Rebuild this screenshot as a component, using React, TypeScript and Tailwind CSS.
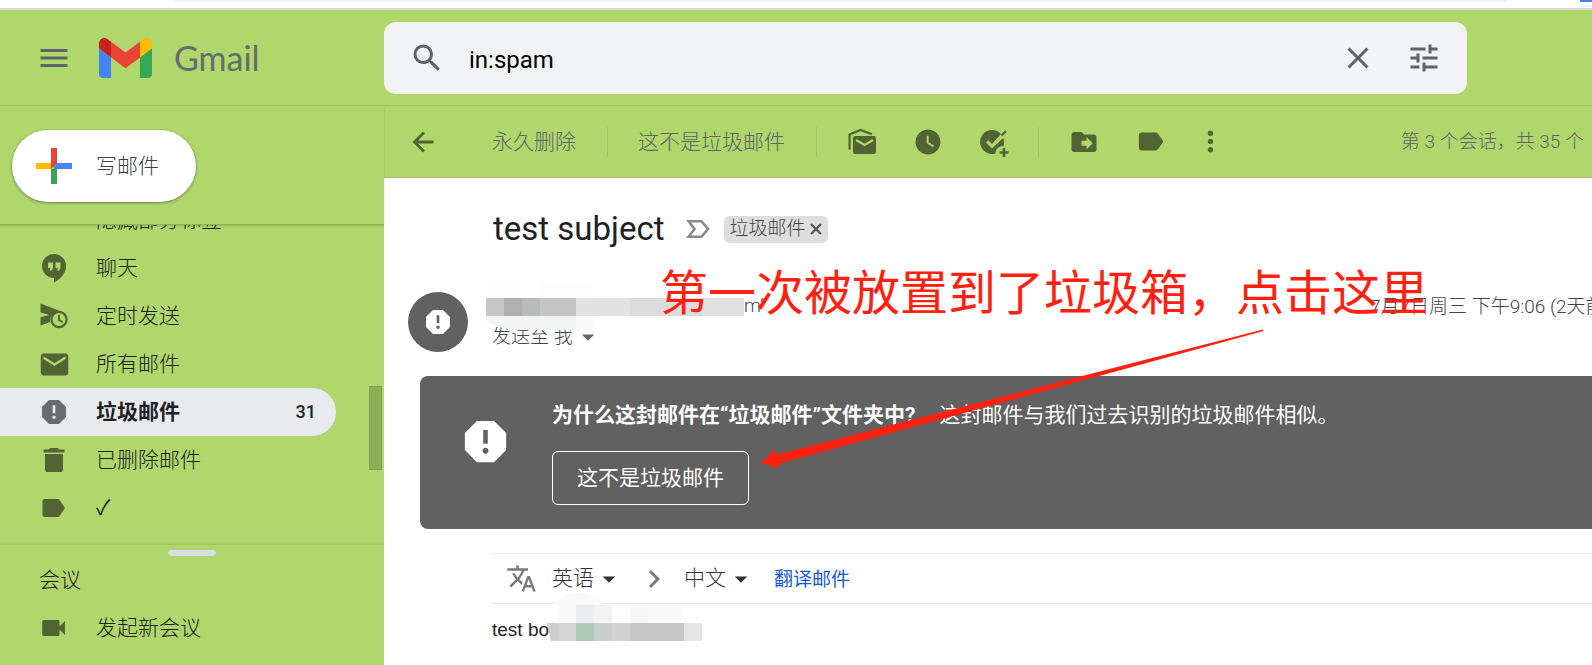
import type { ReactNode } from "react";
import {
  MdArrowDropDown,
  MdChevronRight,
  MdClose,
  MdDriveFileMove,
  MdEmail,
  MdLabel,
  MdMenu,
  MdMoreVert,
  MdReport,
  MdSearch,
  MdTranslate,
  MdTune,
  MdWatchLater,
} from "react-icons/md";

function GmailLogo() {
  return (
    <svg viewBox="52 42 88 66" className="h-10 w-[53px]" aria-hidden="true">
      <path fill="#4285f4" d="M58 108h14V74L52 59v43c0 3.32 2.69 6 6 6" />
      <path fill="#34a853" d="M120 108h14c3.32 0 6-2.69 6-6V59l-20 15" />
      <path fill="#fbbc04" d="M120 48v26l20-15v-8c0-7.42-8.47-11.65-14.4-7.2" />
      <path fill="#ea4335" d="M72 74V48l24 18 24-18v26L96 92" />
      <path fill="#c5221f" d="M52 51v8l20 15V48l-5.6-4.2c-5.94-4.45-14.4-.22-14.4 7.2" />
    </svg>
  );
}

function ComposeIcon() {
  return (
    <svg viewBox="0 0 36 36" className="size-9" aria-hidden="true">
      <path fill="#34a853" d="M15 18h6v18h-6z" />
      <path fill="#4285f4" d="M36 15H18v6h18z" />
      <path fill="#fbbc04" d="M0 15h18v6H0z" />
      <path fill="#ea4335" d="M15 0h6v15l-6 6z" />
    </svg>
  );
}

function ChatIcon() {
  return (
    <svg viewBox="0 0 30 30" className="size-[30px]" fill="currentColor" aria-hidden="true">
      <path
        fillRule="evenodd"
        d="M15 1a12 12 0 0 0 0 24v4.500c7-3.500 12-9.500 12-16.500A12 12 0 0 0 15 1ZM9 9.500h5v4.500c0 2.200-1 3.500-3 4v-3H9zM16.500 9.500h5v4.500c0 2.200-1 3.500-3 4v-3h-2z"
      />
    </svg>
  );
}

function ScheduledIcon() {
  return (
    <svg viewBox="0 0 30 30" className="size-[30px]" fill="currentColor" aria-hidden="true">
      <path d="M1.500 2.500l22 8.500c-6.500-1.200-11 1.500-12.500 6.500v3.500L1.500 24.500v-8.300l9-2.200-9-2.500z" />
      <circle cx="20" cy="18.500" r="7.600" fill="none" stroke="currentColor" strokeWidth="2.200" />
      <path d="M19 14h2v4.500l3.200 2-.9 1.600L19 19.500z" />
    </svg>
  );
}

function TrashIcon() {
  return (
    <svg viewBox="0 0 30 30" className="size-[30px]" fill="currentColor" aria-hidden="true">
      <path d="M4.500 4.500h5.200L11.200 3h7.600l1.500 1.500h5.200v3h-21zM6 9h18v15.500a2.600 2.600 0 0 1-2.600 2.600H8.600A2.600 2.600 0 0 1 6 24.500z" />
    </svg>
  );
}

function TagIcon() {
  return (
    <svg viewBox="0 0 30 30" className="size-[30px]" fill="currentColor" aria-hidden="true">
      <path d="M5.800 6h12.700c.8 0 1.500.4 2 1l5.500 8-5.500 8c-.5.600-1.200 1-2 1H5.800A2.300 2.300 0 0 1 3.500 21.700V8.300A2.300 2.300 0 0 1 5.800 6z" />
    </svg>
  );
}

function CameraIcon() {
  return (
    <svg viewBox="0 0 30 30" className="size-[30px]" fill="currentColor" aria-hidden="true">
      <path d="M4.500 7h14.700c.8 0 1.300.6 1.300 1.300v5L26 8v14l-5.500-5.300v5c0 .7-.6 1.300-1.300 1.300H4.500c-.8 0-1.300-.6-1.300-1.300V8.300C3.200 7.600 3.800 7 4.500 7z" />
    </svg>
  );
}

function BackIcon() {
  return (
    <svg viewBox="0 0 30 30" className="size-[30px]" fill="none" aria-hidden="true">
      <path stroke="currentColor" strokeWidth="2.800" d="M25.500 15h-19M16 5.500L6.500 15l9.500 9.500" />
    </svg>
  );
}

function UnreadIcon() {
  return (
    <svg viewBox="0 0 33 33" className="size-[33px]" fill="none" aria-hidden="true">
      <path stroke="currentColor" strokeWidth="2.200" d="M3.600 24.500V9.500L14.500 5l11.500 4.300" />
      <path
        fill="currentColor"
        d="M9.300 11h18.400A2.300 2.300 0 0 1 30 13.300v13.400a2.300 2.300 0 0 1-2.300 2.300H9.300A2.300 2.300 0 0 1 7 26.700V13.300A2.300 2.300 0 0 1 9.300 11z"
      />
      <path stroke="#afd76b" strokeWidth="2.200" d="M10 15l8.500 5 8.500-5" />
    </svg>
  );
}

function AddTaskIcon() {
  return (
    <svg viewBox="0 0 32 32" className="size-8" fill="none" aria-hidden="true">
      <path
        fill="currentColor"
        d="M14 4a12 12 0 1 0 3.500 23.500c0-4 2.500-7 8-7.500.9-2.500.9-5.500-.3-8L14 22.500l-6-6 2.300-2.300 3.700 3.700L23 8A12 12 0 0 0 14 4z"
      />
      <path stroke="currentColor" strokeWidth="2.200" d="M23.500 9.500L28 5" />
      <path stroke="currentColor" strokeWidth="2.600" d="M26 22v9M21.500 26.500h9" />
    </svg>
  );
}

function ImportantIcon() {
  return (
    <svg viewBox="0 0 24 20" className="h-5 w-6" fill="none" aria-hidden="true">
      <path stroke="#8a8a8a" strokeWidth="2.600" d="M2.500 2.200h13l6.500 7.800-6.500 7.800h-13L8.500 10z" />
    </svg>
  );
}

function SmallCloseIcon() {
  return (
    <svg viewBox="0 0 12 12" className="size-3" fill="none" aria-hidden="true">
      <path stroke="currentColor" strokeWidth="2.200" d="M1 1l10 10M11 1L1 11" />
    </svg>
  );
}

interface NavItemProps {
  icon?: ReactNode;
  label: ReactNode;
  count?: number;
  active?: boolean;
}

function NavItem({ icon, label, count, active }: NavItemProps) {
  return (
    <li>
      <a
        href="#"
        className={`mr-12 flex h-12 items-center rounded-r-full pr-5 pl-9 ${
          active ? "bg-[#e8eaed] font-bold" : "font-light"
        }`}
      >
        <span
          className={`flex w-9 shrink-0 justify-center ${active ? "text-[#6b6c6e]" : "text-[#526434]"}`}
        >
          {icon}
        </span>
        <span className="ml-6 flex-1 pt-0.5">{label}</span>
        {count && <span className="text-lg font-medium">{count}</span>}
      </a>
    </li>
  );
}

function Sidebar() {
  return (
    <aside className="flex w-96 shrink-0 flex-col">
      <div className="z-10 border-b border-[#8fb356] px-3 pt-6 pb-[22px] shadow-[0_1px_2px_rgba(0,0,0,0.15)]">
        <button className="flex h-18 items-center rounded-full bg-white pr-[37px] pl-6 font-light text-[#3c4043] shadow-[0_1px_3px_rgba(60,64,67,0.6)]">
          <ComposeIcon />
          <span className="ml-6 pt-0.5">写邮件</span>
        </button>
      </div>

      <nav className="relative min-h-0 flex-1 overflow-hidden">
        <ul className="-mt-[29px]">
          <NavItem label="隐藏部分标签" />
          <NavItem icon={<ChatIcon />} label="聊天" />
          <NavItem icon={<ScheduledIcon />} label="定时发送" />
          <NavItem icon={<MdEmail size={33} />} label="所有邮件" />
          <NavItem icon={<MdReport size={32} />} label="垃圾邮件" count={31} active />
          <NavItem icon={<TrashIcon />} label="已删除邮件" />
          <NavItem icon={<TagIcon />} label={<b>✓</b>} />
        </ul>
        {/* Scrollbar thumb */}
        <div className="absolute top-[161px] right-0.5 h-[84px] w-[13px] border border-[#84a350] bg-[#8dac56]" />
      </nav>

      <section className="border-t border-[#a2c762] pt-[5px] pb-[13px] shadow-[0_-1px_2px_rgba(0,0,0,0.06)]">
        <div className="mx-auto h-1.5 w-12 rounded-full bg-[#dadce0]" />
        <h2 className="flex h-12 items-center pt-0.5 pl-[39px] font-light">会议</h2>
        <ul>
          <NavItem icon={<CameraIcon />} label="发起新会议" />
        </ul>
      </section>
    </aside>
  );
}

function Header() {
  return (
    <header className="flex h-24 shrink-0 items-center border-b border-[#a0c562]">
      <div className="flex w-96 shrink-0 items-center pl-9">
        <button aria-label="主菜单" className="text-[#5f6368]">
          <MdMenu size={36} />
        </button>
        <a href="#" className="ml-[27px] flex items-center">
          <GmailLogo />
          <span className="ml-[22px] font-[Lato] text-[34px] leading-10 text-[#666b70]">Gmail</span>
        </a>
      </div>
      <form className="flex h-18 flex-1 items-center rounded-xl bg-[#f1f3f4] pr-[25px] pl-[25px] text-[#5f6368]">
        <button type="button" aria-label="搜索">
          <MdSearch size={36} />
        </button>
        <input
          aria-label="搜索邮件"
          defaultValue="in:spam"
          className="ml-6 min-w-0 flex-1 bg-transparent pt-1 text-2xl text-black outline-none"
        />
        <button type="button" aria-label="清除搜索">
          <MdClose size={36} />
        </button>
        <button type="button" aria-label="显示搜索选项" className="ml-[30px]">
          <MdTune size={36} />
        </button>
      </form>
      <div className="w-[125px] shrink-0" />
    </header>
  );
}

function Divider() {
  return <span className="h-[30px] w-px bg-[#a1c467]" />;
}

function Toolbar() {
  return (
    <div className="flex h-18 shrink-0 items-center border-b border-[#a6c874] pr-2 pl-6 text-[#526434]">
      <button aria-label="返回">
        <BackIcon />
      </button>
      <button className="ml-[54px] pt-0.5 font-light text-[#5f6368]">永久删除</button>
      <span className="w-[31px]" />
      <Divider />
      <button className="ml-[30px] pt-0.5 font-light text-[#5f6368]">这不是垃圾邮件</button>
      <span className="w-[31px]" />
      <Divider />
      <button aria-label="标记为未读" className="ml-[29px]">
        <UnreadIcon />
      </button>
      <button aria-label="延后" className="ml-[34px]">
        <MdWatchLater size={30} />
      </button>
      <button aria-label="添加到任务" className="ml-[35px]">
        <AddTaskIcon />
      </button>
      <span className="w-[28px]" />
      <Divider />
      <button aria-label="移至" className="ml-[30px]">
        <MdDriveFileMove size={30} />
      </button>
      <button aria-label="标签" className="ml-[36px]">
        <MdLabel size={31} />
      </button>
      <button aria-label="更多" className="ml-[28px]">
        <MdMoreVert size={33} />
      </button>
      <span className="ml-auto pt-0.5 text-[19px] font-light text-[#5f6368]">
        第 3 个会话，共 35 个
      </span>
    </div>
  );
}

// Blurred sender name, drawn as a strip of blocks
function SenderMosaic() {
  return (
    <svg viewBox="0 0 258 50" className="absolute -top-4 -left-1.5 h-[50px] w-[258px]" aria-hidden="true">
      <path fill="#fdfdfd" d="M0 0h36v18H0zM54 1h54v17H54z" />
      <path fill="#f2f4f4" d="M0 36h90v14H28Q10 48 0 40z" />
      <path fill="#fafafa" d="M90 36h18v14H90z" />
      <path fill="#c6c6c6" d="M0 18h18v18H0z" />
      <path fill="#b0b0b0" d="M18 18h18v18H18z" />
      <path fill="#b8babc" d="M36 18h18v18H36z" />
      <path fill="#c5c5c5" d="M54 18h36v18H54z" />
      <path fill="#e2e2e2" d="M90 18h54v18H90z" />
      <path fill="#dcdcdc" d="M144 18h72v18h-72z" />
      <path fill="#e1e1e1" d="M216 18h42v18h-42z" />
    </svg>
  );
}

function BodyMosaic() {
  return (
    <svg viewBox="0 0 155 48" className="absolute -top-[23px] left-[55px] h-12 w-[155px]" aria-hidden="true">
      <path fill="#fafafa" d="M7 12Q15 0 32 0t27 12h77v18H11V12z" />
      <path fill="#ebedf2" d="M29 12h18v18H29z" />
      <path fill="#f3f3f3" d="M47 12h18v18H47z" />
      <path fill="#fdfdfd" d="M65 12h18v18H65z" />
      <path fill="#f7f7f7" d="M83 12h18v18H83z" />
      <path fill="#cdcdcd" d="M0 30h11v18H4z" />
      <path fill="#d5d5d5" d="M11 30h18v18H11z" />
      <path fill="#aecbb8" d="M29 30h18v18H29z" />
      <path fill="#c8cfcf" d="M47 30h18v18H47z" />
      <path fill="#d2d2d2" d="M65 30h18v18H65z" />
      <path fill="#c6c6c6" d="M83 30h54v18H83z" />
      <path fill="#e5e5e5" d="M137 30h18v18h-18z" />
    </svg>
  );
}

function SpamBanner() {
  return (
    <div className="ml-9 flex h-[153px] items-start rounded-l-lg bg-[#616161] text-white">
      <MdReport className="mt-[38px] ml-[38px] shrink-0" size={55} />
      <div className="ml-[39px] pt-6">
        <p className="leading-[30px] whitespace-nowrap">
          <b className="mr-6">为什么这封邮件在“垃圾邮件”文件夹中?</b>
          这封邮件与我们过去识别的垃圾邮件相似。
        </p>
        <button className="mt-[21px] h-[54px] rounded-md border border-white px-6 pt-0.5">
          这不是垃圾邮件
        </button>
      </div>
    </div>
  );
}

function Annotation() {
  return (
    <>
      <p className="absolute top-20 left-[276px] text-5xl leading-[72px] whitespace-nowrap text-[#ff2010]">
        第一次被放置到了垃圾箱，点击这里
      </p>
      <svg viewBox="760 328 506 142" className="absolute top-[150px] left-[376px] h-[142px] w-[506px]" aria-hidden="true">
        <path fill="#ff2010" d="M761 463l14-14 2 5.500L1263 329.600l.5 1.300L778 464l1 4.500z" />
      </svg>
    </>
  );
}

function Message() {
  return (
    <main className="relative min-h-0 flex-1 overflow-hidden bg-white">
      <div className="flex h-[102px] items-center pl-[109px]">
        <h1 className="text-[33px] text-[#202124]">test subject</h1>
        <span className="ml-[21px]">
          <ImportantIcon />
        </span>
        <span className="ml-3.5 flex h-[27px] items-center rounded-md bg-[#ddd] px-1.5 text-[19px] font-light text-[#444]">
          垃圾邮件
          <button aria-label="移除标签" className="ml-1 text-[#555]">
            <SmallCloseIcon />
          </button>
        </span>
      </div>

      <div className="flex h-24 pl-6">
        <div className="mt-3 flex size-15 shrink-0 items-center justify-center rounded-full bg-[#616161] text-white">
          <MdReport size={32} />
        </div>
        <div className="relative mt-4 ml-6 flex-1 text-[19px] leading-6 font-light text-[#444]">
          <p className="pl-[252px] leading-[20px]">m”</p>
          <p className="mt-1.5 flex items-center">
            发送至 我
            <MdArrowDropDown size={30} className="text-[#666]" />
          </p>
          <SenderMosaic />
        </div>
        <div className="mt-3 w-[222px] shrink-0 pt-px text-[19px] font-light whitespace-nowrap text-[#444]">
          7月7日周三 下午9:06 (2天前)
        </div>
      </div>

      <SpamBanner />

      <div className="mt-6 ml-[108px] flex h-[51px] items-center border-y border-[#e8e8e8] pl-3.5 font-light text-[#333]">
        <MdTranslate size={31} className="text-[#7a7a7a]" />
        <button className="ml-[15px] flex items-center">
          英语
          <MdArrowDropDown size={30} />
        </button>
        <MdChevronRight size={36} className="ml-3 text-[#7a7a7a]" />
        <button className="ml-3 flex items-center">
          中文
          <MdArrowDropDown size={30} />
        </button>
        <a href="#" className="ml-[18px] pt-1 text-[19px] font-normal text-[#1558d6]">
          翻译邮件
        </a>
      </div>

      <div className="relative mt-3 ml-[108px] font-['Liberation_Sans'] text-[19px] leading-7 text-[#222]">
        test bo
        <BodyMosaic />
      </div>

      <Annotation />
    </main>
  );
}

export default function App() {
  return (
    <div className="flex h-screen flex-col overflow-hidden bg-[#afd76b] font-[Roboto,'Noto_Sans_CJK_SC',sans-serif] text-[21px] text-[#202124]">
      {/* Bottom edge of the browser bar */}
      <div className="flex h-2.5 shrink-0 items-start border-b-2 border-[#dadce0] bg-white pl-[174px]">
        <div className="h-0.5 flex-1 rounded-b-full bg-[#f1f3f4]" />
        <div className="ml-[73px] h-0.5 w-3 bg-[#4285f4]" />
      </div>
      <Header />
      <div className="flex min-h-0 flex-1">
        <Sidebar />
        <div className="flex min-w-0 flex-1 flex-col">
          <Toolbar />
          <Message />
        </div>
      </div>
    </div>
  );
}
